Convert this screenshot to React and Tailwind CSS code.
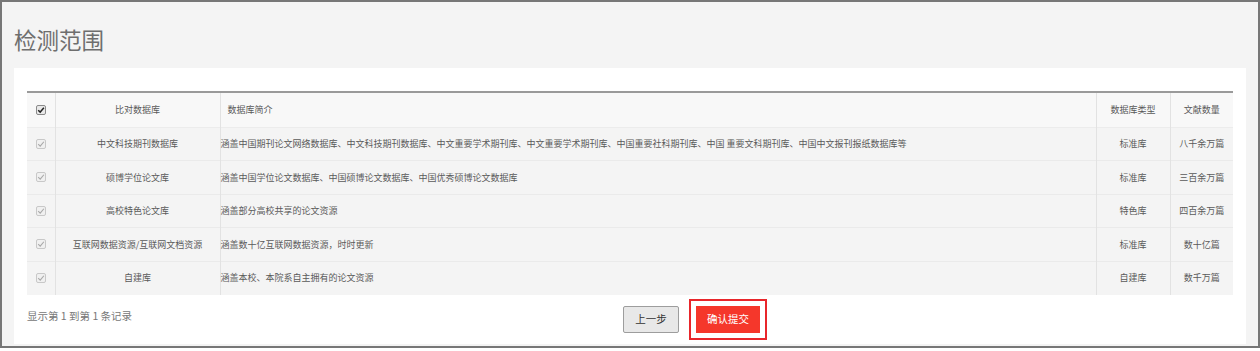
const rows = [
  {
    name: '中文科技期刊数据库',
    desc: '涵盖中国期刊论文网络数据库、中文科技期刊数据库、中文重要学术期刊库、中文重要学术期刊库、中国重要社科期刊库、中国 重要文科期刊库、中国中文报刊报纸数据库等',
    type: '标准库',
    count: '八千余万篇',
  },
  {
    name: '硕博学位论文库',
    desc: '涵盖中国学位论文数据库、中国硕博论文数据库、中国优秀硕博论文数据库',
    type: '标准库',
    count: '三百余万篇',
  },
  { name: '高校特色论文库', desc: '涵盖部分高校共享的论文资源', type: '特色库', count: '四百余万篇' },
  {
    name: '互联网数据资源/互联网文档资源',
    desc: '涵盖数十亿互联网数据资源，时时更新',
    type: '标准库',
    count: '数十亿篇',
  },
  { name: '自建库', desc: '涵盖本校、本院系自主拥有的论文资源', type: '自建库', count: '数千万篇' },
];

// old-style checkbox, drawn so it looks the same everywhere
function Check({ dim }) {
  return (
    <span
      className={
        'inline-flex w-[10px] h-[10px] items-center justify-center rounded-[2px] border ' +
        (dim ? 'border-[#c8c8c8] bg-[#f0f0f0]' : 'border-[#8a8a8a] bg-[#e9e9e9]')
      }
    >
      <svg viewBox="0 0 10 10" className="w-[8px] h-[8px]">
        <path
          d="M1.5 5.2 L4 7.6 L8.6 2.2"
          fill="none"
          stroke={dim ? '#a9a9a9' : '#222'}
          strokeWidth={dim ? 1.4 : 1.8}
        />
      </svg>
    </span>
  );
}

export default function App() {
  return (
    <div
      className="w-[1260px] h-[348px] border-2 border-[#777] bg-[#f4f4f4] flex flex-col"
      style={{ fontFamily: '"Noto Sans CJK SC", "Noto Sans", sans-serif' }}
    >
      {/* Title */}
      <div className="h-[66px] shrink-0 flex items-center pl-[12px]">
        <h1 className="text-[22.5px] leading-none text-[#6e6e6e] font-normal mt-[8px]">检测范围</h1>
      </div>

      {/* Card */}
      <div className="mx-[12px] h-[276px] bg-white px-[13px] pt-[23px]">
        <table className="w-full table-fixed border-collapse text-[9px] text-[#5a5a5a] border-t-2 border-[#9a9a9a]">
          <colgroup>
            <col className="w-[28px]" />
            <col className="w-[165px]" />
            <col />
            <col className="w-[74px]" />
            <col className="w-[63px]" />
          </colgroup>
          <thead>
            <tr className="h-[35px] bg-[#f8f8f8] border-b border-[#ececec]">
              <th className="font-normal text-center border-r border-[#e2e2e2]">
                <div className="flex justify-center"><Check /></div>
              </th>
              <th className="font-normal text-center border-r border-[#e2e2e2]">比对数据库</th>
              <th className="font-normal text-left pl-[7px] border-r border-[#e2e2e2]">数据库简介</th>
              <th className="font-normal text-center border-r border-[#e2e2e2]">数据库类型</th>
              <th className="font-normal text-center">文献数量</th>
            </tr>
          </thead>
          <tbody>
            {rows.map((r) => (
              <tr key={r.name} className="h-[33.5px] bg-[#f4f4f4] border-b border-[#eaeaea] last:border-b-0">
                <td className="border-r border-[#e2e2e2]">
                  <div className="flex justify-center"><Check dim /></div>
                </td>
                <td className="text-center border-r border-[#e2e2e2] whitespace-nowrap">{r.name}</td>
                <td className="text-left border-r border-[#e2e2e2] whitespace-nowrap">{r.desc}</td>
                <td className="text-center border-r border-[#e2e2e2]">{r.type}</td>
                <td className="text-center">{r.count}</td>
              </tr>
            ))}
          </tbody>
        </table>

        {/* Footer */}
        <div className="mt-[2px] h-[45px] flex items-center">
          <span className="w-[596px] shrink-0 text-[10.5px] text-[#777] pb-[7px]">显示第 1 到第 1 条记录</span>
          <button className="w-[56px] h-[27px] bg-[#e8e8e8] border border-[#9d9d9d] rounded-[2px] text-[10.5px] text-[#333]">
            上一步
          </button>
          <span className="ml-[10px] border-2 border-[#e8262b] p-[5px] flex">
            <button className="w-[64px] h-[27px] bg-[#f5372b] text-white text-[10.5px]">确认提交</button>
          </span>
        </div>
      </div>
    </div>
  );
}
